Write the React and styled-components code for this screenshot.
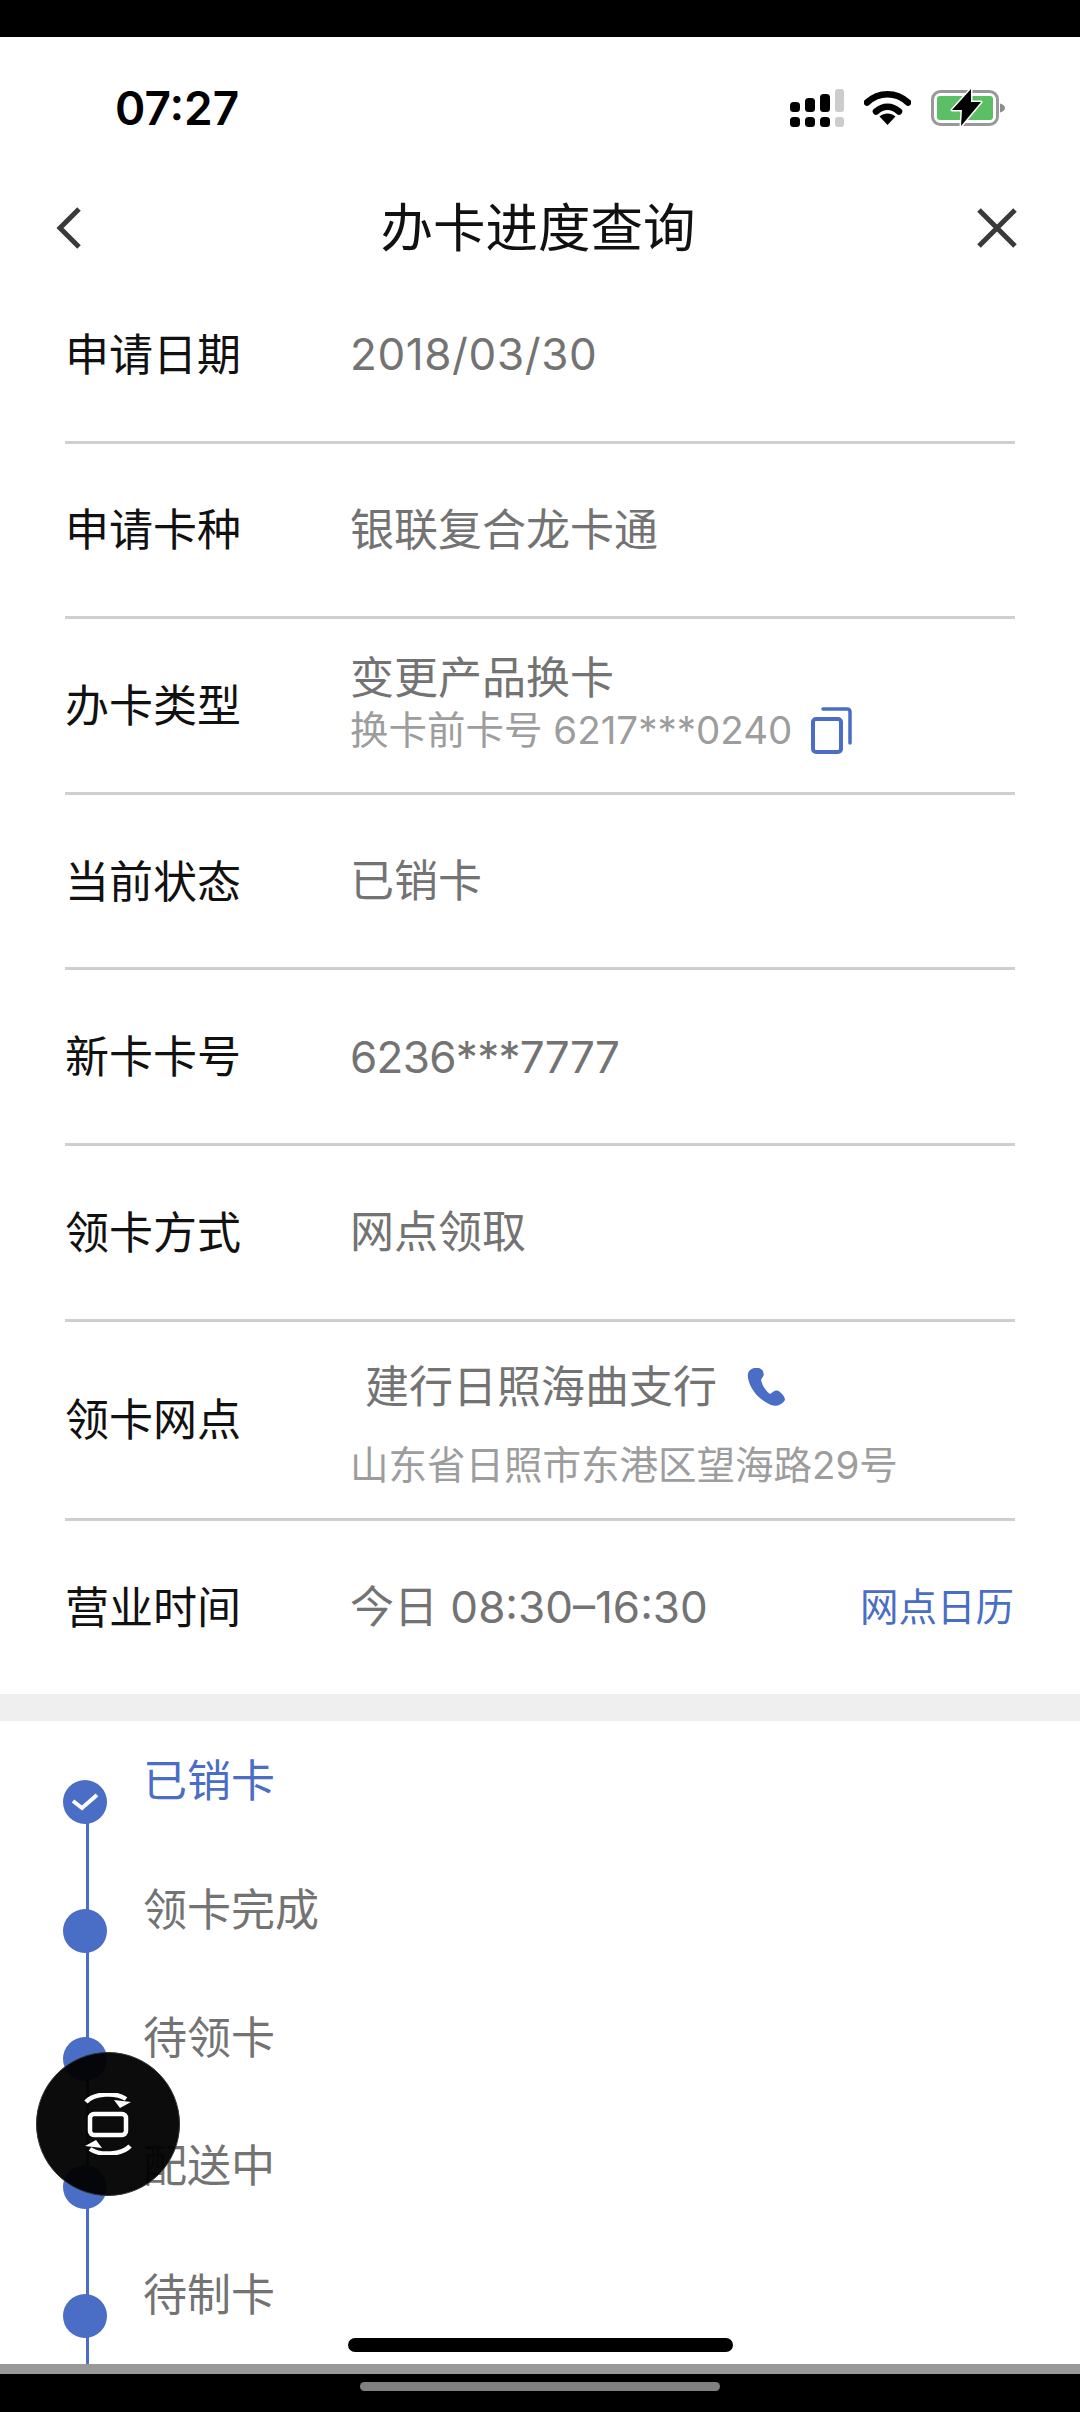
import React from 'react'
import styled, { createGlobalStyle } from 'styled-components'

const GlobalStyle = createGlobalStyle`
  html, body { margin: 0; padding: 0; background: #000; }
  body { font-family: "Inter", "Noto Sans CJK SC", sans-serif; }
`

const BLUE = '#4a6dc6'

const Page = styled.div`
  position: relative;
  width: 1080px;
  height: 2412px;
  overflow: hidden;
  display: flex;
  flex-direction: column;
  background: #000;
`
const TopBlack = styled.div`
  height: 37px;
  flex: none;
`
const Screen = styled.div`
  flex: 1;
  min-height: 0;
  overflow: hidden;
  background: #fff;
`
const StatusBar = styled.div`
  height: 151px;
  padding: 50px 75px 0 115px;
  box-sizing: border-box;
  display: flex;
  justify-content: space-between;
  align-items: flex-start;
`
const Time = styled.div`
  font-size: 46px;
  line-height: 42px;
  font-weight: 600;
  color: #000;
  font-family: "Inter", sans-serif;
`
const IconRow = styled.div`
  display: flex;
  align-items: center;
  gap: 20px;
  margin-top: 1px;
`
const NavBar = styled.div`
  height: 80px;
  padding: 0 62px 0 56px;
  display: flex;
  align-items: center;
`
const NavSide = styled.div`
  width: 42px;
  display: flex;
  justify-content: ${p => (p.$end ? 'flex-end' : 'flex-start')};
`
const Title = styled.div`
  flex: 1;
  text-align: center;
  font-size: 52.5px;
  color: #111;
  line-height: 60px;
  padding-left: 2px;
`
const Rows = styled.div`
  padding: 0 65px;
`
const Row = styled.div`
  height: ${p => p.$h || 175.6}px;
  box-sizing: border-box;
  display: flex;
  align-items: center;
  border-bottom: ${p => (p.$last ? 'none' : '3px solid #cfcfcf')};
  padding-bottom: ${p => (p.$last ? 2 : 0)}px;
`
const Label = styled.div`
  width: 286px;
  flex: none;
  font-size: 44px;
  line-height: 50px;
  color: #111;
  padding-top: 1px;
`
const Value = styled.div`
  flex: 1;
  font-size: 44px;
  line-height: 50px;
  color: #737373;
  margin-left: -1px;
  letter-spacing: ${p => p.$track || 0}px;
`
const Stack = styled.div`
  flex: 1;
  display: flex;
  flex-direction: column;
  gap: ${p => p.$gap || 0}px;
  padding-top: ${p => p.$top || 0}px;
  padding-bottom: ${p => p.$bottom || 0}px;
`
const Sub = styled.div`
  font-size: 38.5px;
  line-height: 46px;
  color: #9d9d9d;
  display: flex;
  align-items: center;
  margin-left: -1px;
`
const Branch = styled.div`
  font-size: 44px;
  line-height: 50px;
  color: #737373;
  padding-left: 14px;
  display: flex;
  align-items: center;
  gap: 30px;
`
const CalendarLink = styled.div`
  font-size: 38.5px;
  line-height: 46px;
  color: ${BLUE};
  margin-right: 1px;
  margin-top: -1px;
`
const Band = styled.div`
  height: 27px;
  background: #efefef;
  margin-top: -2px;
`
const Timeline = styled.div`
  padding: 38px 0 0 63px;
`
const Step = styled.div`
  height: 128.4px;
  display: flex;
  align-items: flex-start;
  gap: 36px;
`
const Dot = styled.div`
  position: relative;
  width: 44px;
  height: 44px;
  margin-top: 21px;
  border-radius: 50%;
  background: ${BLUE};
  display: flex;
  align-items: center;
  justify-content: center;
  flex: none;
  &::after {
    content: '';
    position: absolute;
    left: 23px;
    top: 42px;
    width: 3px;
    height: 88px;
    background: ${BLUE};
  }
`
const StepName = styled.div`
  font-size: 44px;
  line-height: 44px;
  color: ${p => (p.$active ? BLUE : '#737373')};
`
const FloatButton = styled.div`
  position: absolute;
  left: 36px;
  top: 2052px;
  width: 144px;
  height: 144px;
  box-sizing: border-box;
  border-radius: 50%;
  background: rgba(2, 2, 2, 0.96);
  border: 1px solid #333;
  display: flex;
  align-items: center;
  justify-content: center;
`
const HomeBar = styled.div`
  position: absolute;
  left: 348px;
  top: 2338px;
  width: 385px;
  height: 14px;
  border-radius: 7px;
  background: #000;
`
const GreyStrip = styled.div`
  height: 10px;
  flex: none;
  background: #999;
`
const BottomBlack = styled.div`
  height: 38px;
  flex: none;
  display: flex;
  justify-content: center;
  padding-top: 8px;
  box-sizing: border-box;
`
const SystemPill = styled.div`
  width: 360px;
  height: 9px;
  border-radius: 5px;
  background: #808080;
`
const CopySvg = styled.svg`
  margin-left: 19px;
`

const SignalIcon = () => (
  <svg width="54" height="38" viewBox="0 0 54 38">
    <rect x="0" y="13" width="10" height="10" rx="3.5" fill="#000" />
    <rect x="15" y="9" width="10" height="14" rx="3.5" fill="#000" />
    <rect x="30" y="5" width="10" height="18" rx="3.5" fill="#000" />
    <rect x="45" y="0" width="9" height="23" rx="3" fill="#ccc" />
    <rect x="0" y="28" width="10" height="10" rx="3.5" fill="#000" />
    <rect x="15" y="28" width="10" height="10" rx="3.5" fill="#000" />
    <rect x="30" y="28" width="10" height="10" rx="3.5" fill="#000" />
    <rect x="45" y="28" width="9" height="10" rx="3" fill="#ccc" />
  </svg>
)

const WifiIcon = () => (
  <svg width="47" height="34" viewBox="0 0 47 34">
    <path d="M3 11.5C15 0.5 32 0.5 44 11.5" fill="none" stroke="#000" strokeWidth="6.5" strokeLinecap="round" />
    <path d="M12 20.5C19 14 28 14 35 20.5" fill="none" stroke="#000" strokeWidth="6.5" strokeLinecap="round" />
    <path d="M15.5 25.5C20 21.5 27 21.5 31.5 25.5L23.5 34Z" fill="#000" />
  </svg>
)

const BatteryIcon = () => (
  <svg width="74" height="40" viewBox="0 0 74 40">
    <rect x="1.5" y="3.5" width="65" height="33" rx="8" fill="#fff" stroke="#999" strokeWidth="3" />
    <rect x="6" y="8" width="56" height="24" rx="3" fill="#5dbf65" />
    <path d="M69 15.5C72 16 74 18 74 20C74 22 72 24 69 24.5Z" fill="#8c8c8c" />
    <path d="M40 1L21 22H31L30 38L50 14H40Z" fill="#000" stroke="#fff" strokeWidth="3" strokeLinejoin="round" paintOrder="stroke" />
  </svg>
)

const BackIcon = () => (
  <svg width="26" height="44" viewBox="0 0 26 44">
    <path d="M23 3L4 22L23 41" fill="none" stroke="#3a3a3a" strokeWidth="5" />
  </svg>
)

const CloseIcon = () => (
  <svg width="42" height="42" viewBox="0 0 42 42">
    <path d="M3 3L39 39M39 3L3 39" fill="none" stroke="#3a3a3a" strokeWidth="5" />
  </svg>
)

const CopyIcon = () => (
  <CopySvg width="41" height="47" viewBox="0 0 41 47">
    <path d="M12 2H36C38 2 39 3 39 5V36" fill="none" stroke={BLUE} strokeWidth="3.5" strokeLinecap="round" />
    <rect x="2" y="12" width="28" height="33" rx="3" fill="#fff" stroke={BLUE} strokeWidth="4" />
  </CopySvg>
)

const PhoneIcon = () => (
  <svg width="38" height="38" viewBox="0 0 38 38">
    <path d="M7 0C3 1 0 4 1 10C3 21 11 31 24 37C29 39 35 37 38 32C38 29 36 27 33 24C31 22 28 22 26 24L23 26C18 22 15 17 14 12L15 10C17 8 17 6 16 3C14 0 10 -1 7 0Z" fill={BLUE} />
  </svg>
)

const CheckIcon = () => (
  <svg width="28" height="20" viewBox="0 0 28 20">
    <path d="M2 9L11 16L26 3" fill="none" stroke="#fff" strokeWidth="4" />
  </svg>
)

const SwitchIcon = () => (
  <svg width="48" height="62" viewBox="0 0 48 62">
    <rect x="6" y="21" width="36" height="21" rx="4" fill="none" stroke="#fff" strokeWidth="4.5" />
    <path d="M2 9C10 0 32 -1 42 6" fill="none" stroke="#fff" strokeWidth="4.5" />
    <path d="M30 7L47 9L36 15Z" fill="#fff" />
    <path d="M46 53C38 62 16 63 6 56" fill="none" stroke="#fff" strokeWidth="4.5" />
    <path d="M18 55L1 53L12 47Z" fill="#fff" />
  </svg>
)

const steps = ['已销卡', '领卡完成', '待领卡', '配送中', '待制卡']

function App() {
  return (
    <Page>
      <GlobalStyle />
      <TopBlack />
      <Screen>
        <StatusBar>
          <Time>07:27</Time>
          <IconRow>
            <SignalIcon />
            <WifiIcon />
            <BatteryIcon />
          </IconRow>
        </StatusBar>
        <NavBar>
          <NavSide>
            <BackIcon />
          </NavSide>
          <Title>办卡进度查询</Title>
          <NavSide $end>
            <CloseIcon />
          </NavSide>
        </NavBar>
        <Rows>
          <Row>
            <Label>申请日期</Label>
            <Value $track={0.6}>2018/03/30</Value>
          </Row>
          <Row>
            <Label>申请卡种</Label>
            <Value>银联复合龙卡通</Value>
          </Row>
          <Row>
            <Label>办卡类型</Label>
            <Stack $gap={4} $bottom={4}>
              <Value>变更产品换卡</Value>
              <Sub>换卡前卡号 6217***0240<CopyIcon /></Sub>
            </Stack>
          </Row>
          <Row>
            <Label>当前状态</Label>
            <Value>已销卡</Value>
          </Row>
          <Row>
            <Label>新卡卡号</Label>
            <Value $track={-0.7}>6236***7777</Value>
          </Row>
          <Row>
            <Label>领卡方式</Label>
            <Value>网点领取</Value>
          </Row>
          <Row $h={199}>
            <Label>领卡网点</Label>
            <Stack $gap={30} $top={11}>
              <Branch>建行日照海曲支行<PhoneIcon /></Branch>
              <Sub>山东省日照市东港区望海路29号</Sub>
            </Stack>
          </Row>
          <Row $last>
            <Label>营业时间</Label>
            <Value>今日 08:30–16:30</Value>
            <CalendarLink>网点日历</CalendarLink>
          </Row>
        </Rows>
        <Band />
        <Timeline>
          {steps.map((name, i) => (
            <Step key={name}>
              <Dot>{i === 0 && <CheckIcon />}</Dot>
              <StepName $active={i === 0}>{name}</StepName>
            </Step>
          ))}
        </Timeline>
      </Screen>
      <GreyStrip />
      <BottomBlack>
        <SystemPill />
      </BottomBlack>
      <FloatButton>
        <SwitchIcon />
      </FloatButton>
      <HomeBar />
    </Page>
  )
}

export default App
